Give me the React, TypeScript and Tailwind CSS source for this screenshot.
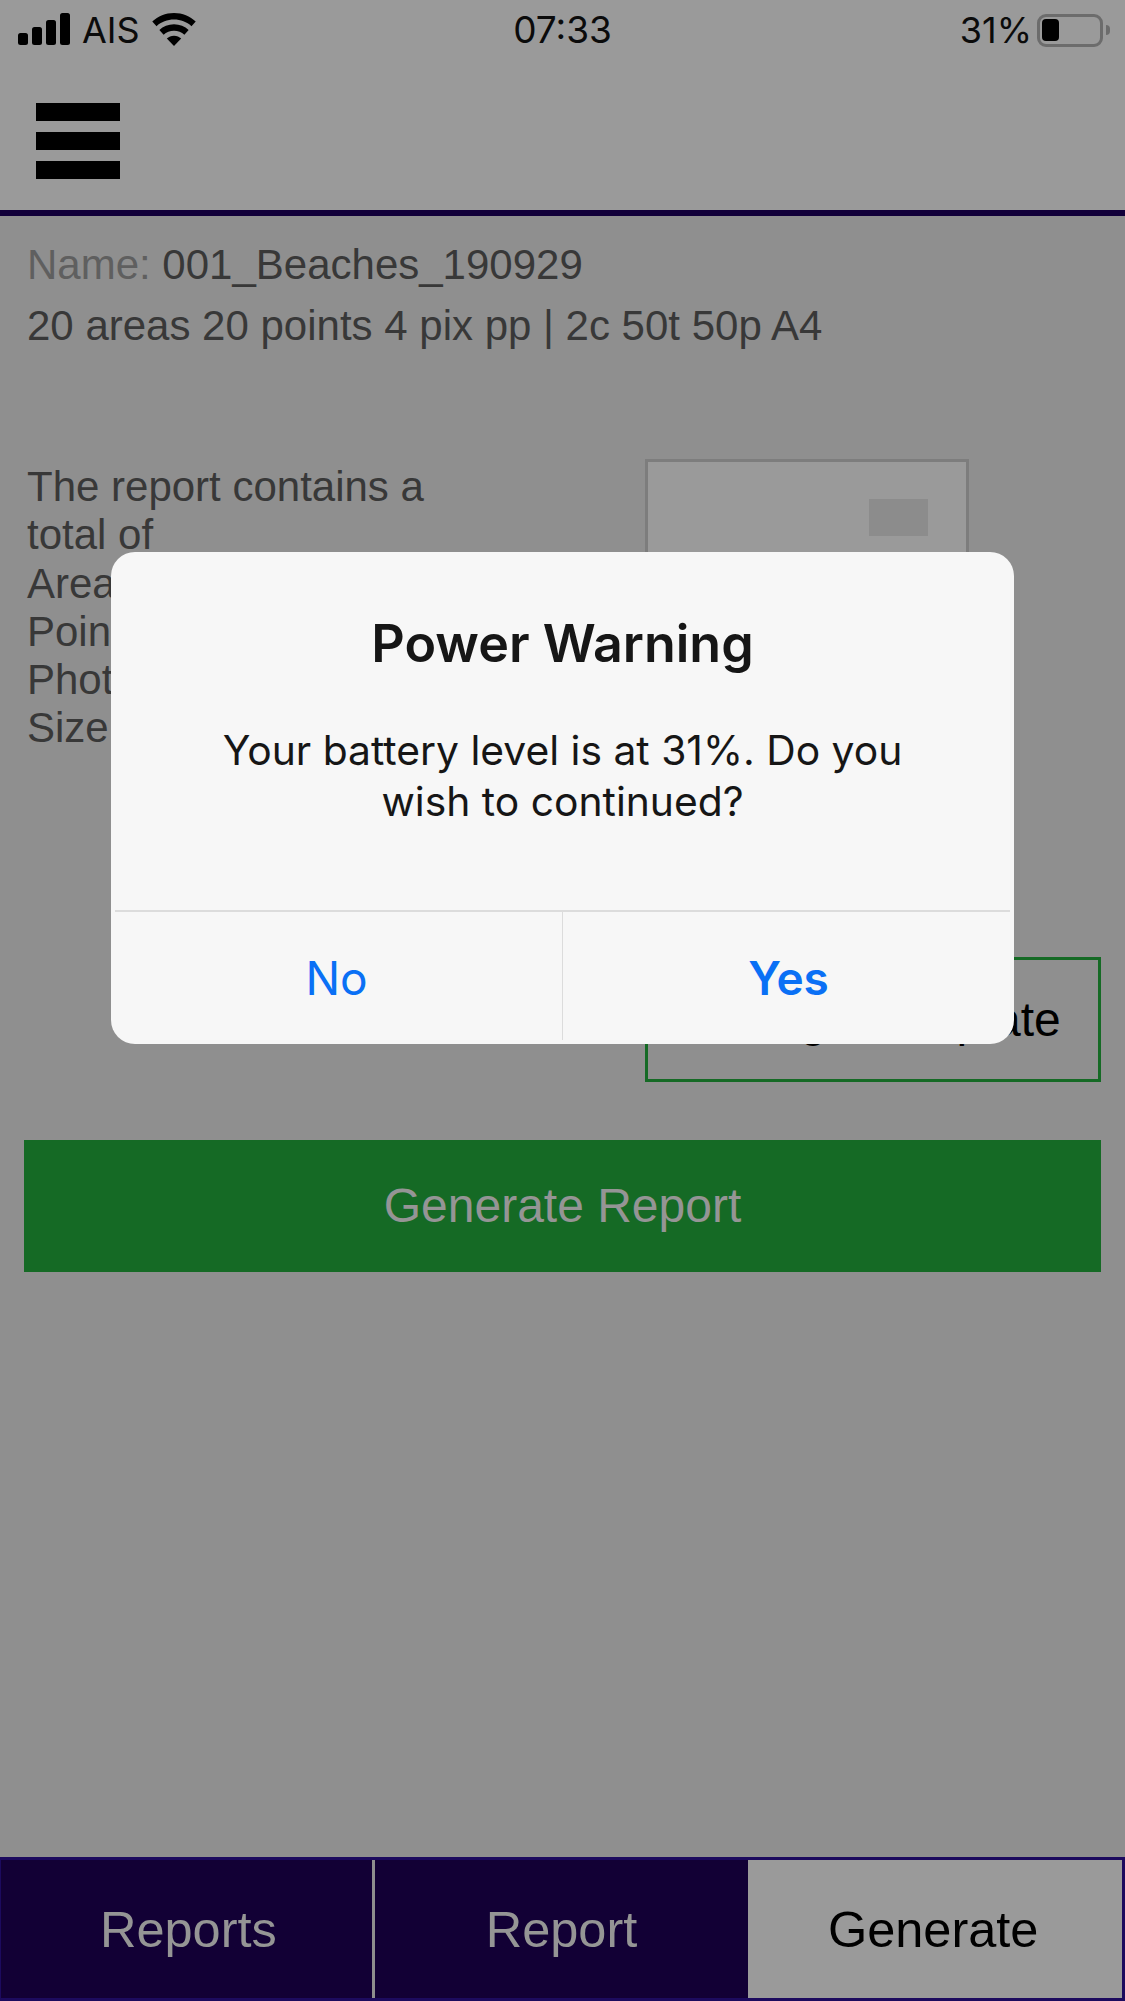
export default function App() {
  return (
    <div className="relative flex h-[2001px] w-[1125px] flex-col overflow-hidden bg-[#8f8f8f] font-['Liberation_Sans',Arial,sans-serif]">
      <header className="h-[216px] border-b-[6px] border-[#12003a] bg-[#9a9a9a]">
        <div className="grid h-[60px] grid-cols-3 items-center font-['Inter',sans-serif] text-[36px] text-[#0b0b0b]">
          <div className="flex items-center pl-[18px]">
            <svg width="52" height="32" viewBox="0 0 52 32" fill="#000" className="mt-[-2px]">
              <rect x="0" y="20" width="10" height="12" rx="2.5" />
              <rect x="14" y="14" width="10" height="18" rx="2.5" />
              <rect x="28" y="7" width="10" height="25" rx="2.5" />
              <rect x="42" y="0" width="10" height="32" rx="2.5" />
            </svg>
            <span className="ml-[12px]">AIS</span>
            <svg width="46" height="34" viewBox="0 0 48 36" fill="#000" className="ml-[11px]">
              <path d="M24 0C15 0 7 3.500 1 9l4.500 5C10.500 9.500 17 7 24 7s13.500 2.500 18.500 7l4.500-5C41 3.500 33 0 24 0Z" />
              <path d="M24 12c-6 0-11.500 2.300-15.500 6l4.500 5c3-2.700 6.800-4.300 11-4.300S32 20.300 35 23l4.500-5C35.500 14.300 30 12 24 12Z" />
              <path d="M24 24c-3 0-5.600 1.100-7.600 3L24 35l7.600-8c-2-1.900-4.600-3-7.600-3Z" />
            </svg>
          </div>
          <div className="text-center text-[37px]">07:33</div>
          <div className="flex items-center justify-end pr-[15px]">
            <span>31%</span>
            <div className="ml-[5px] flex h-[33px] w-[66px] items-center rounded-[9px] border-[3px] border-[#6c6c6c] pl-[2px]">
              <div className="h-[22px] w-[17px] rounded-[4px] bg-black" />
            </div>
            <div className="ml-[3px] h-[10px] w-[4px] rounded-r-full bg-[#6c6c6c]" />
          </div>
        </div>
        <button className="ml-[36px] mt-[43px] flex w-[84px] flex-col gap-[11px]">
          <span className="block h-[18px] bg-black" />
          <span className="block h-[18px] bg-black" />
          <span className="block h-[18px] bg-black" />
        </button>
      </header>

      <section className="pl-[27px] pr-[24px] pt-[18px] text-[42px] leading-[61px] text-[#383838]">
        <p><span className="text-[#5f5f5f]">Name:</span> 001_Beaches_190929</p>
        <p>20 areas 20 points 4 pix pp | 2c 50t 50p A4</p>
      </section>

      <section className="mt-[103px] flex pl-[27px] pr-[24px]">
        <div className="w-[618px] pt-[4px] text-[42px] leading-[48.3px] text-[#383838]">
          <p className="w-[420px]">The report contains a total of</p>
          <p>Areas: 20</p>
          <p>Points: 20</p>
          <p>Photos: 80</p>
          <p>Size: A4</p>
        </div>
        <div className="flex w-[456px] flex-col">
          <div className="flex h-[400px] w-[324px] justify-end border-[3px] border-[#7d7d7d] bg-[#9a9a9a] pr-[38px] pt-[37px]">
            <div className="h-[37px] w-[59px] bg-[#8c8c8c]" />
          </div>
          <button className="mt-[98px] h-[125px] border-[3px] border-[#156a25] text-[48px] text-black">Change Template</button>
        </div>
      </section>

      <div className="px-[24px] pt-[58px]">
        <button className="h-[132px] w-full bg-[#156a25] text-[48px] text-[#959595]">Generate Report</button>
      </div>

      <nav className="mt-auto grid h-[144px] grid-cols-3 border-y-[3px] border-l-[1px] border-r-[3px] border-[#1c0a5e] bg-[#120035] text-[50.5px]">
        <div className="flex items-center justify-center border-r-[3px] border-[#8e8e8e] pl-[4px] pt-[2px] text-[#959595]">Reports</div>
        <div className="flex items-center justify-center pt-[2px] text-[#959595]">Report</div>
        <div className="flex items-center justify-center bg-[#9a9a9a] pr-[4px] pt-[2px] text-black">Generate</div>
      </nav>

      <div className="absolute left-[111px] top-[552px] flex h-[492px] w-[903px] flex-col overflow-hidden rounded-[24px] bg-[#f7f7f7] font-['Inter',sans-serif] text-[#161616]">
        <div className="h-[358px] text-center">
          <h1 className="pt-[62px] text-[52px] font-semibold leading-[60px]">Power Warning</h1>
          <p className="mx-auto mt-[51px] w-[720px] text-[40.8px] leading-[51px]">Your battery level is at 31%. Do you wish to continued?</p>
        </div>
        <div className="mx-[4px] h-[2px] bg-[#dcdcdc]" />
        <div className="flex flex-1 pb-[4px] text-[46px] text-[#0a70f5]">
          <button className="flex-1 border-r-[1px] border-[#dcdcdc] pt-[4px]">No</button>
          <button className="flex-1 pt-[4px] font-semibold">Yes</button>
        </div>
      </div>
    </div>
  );
}
